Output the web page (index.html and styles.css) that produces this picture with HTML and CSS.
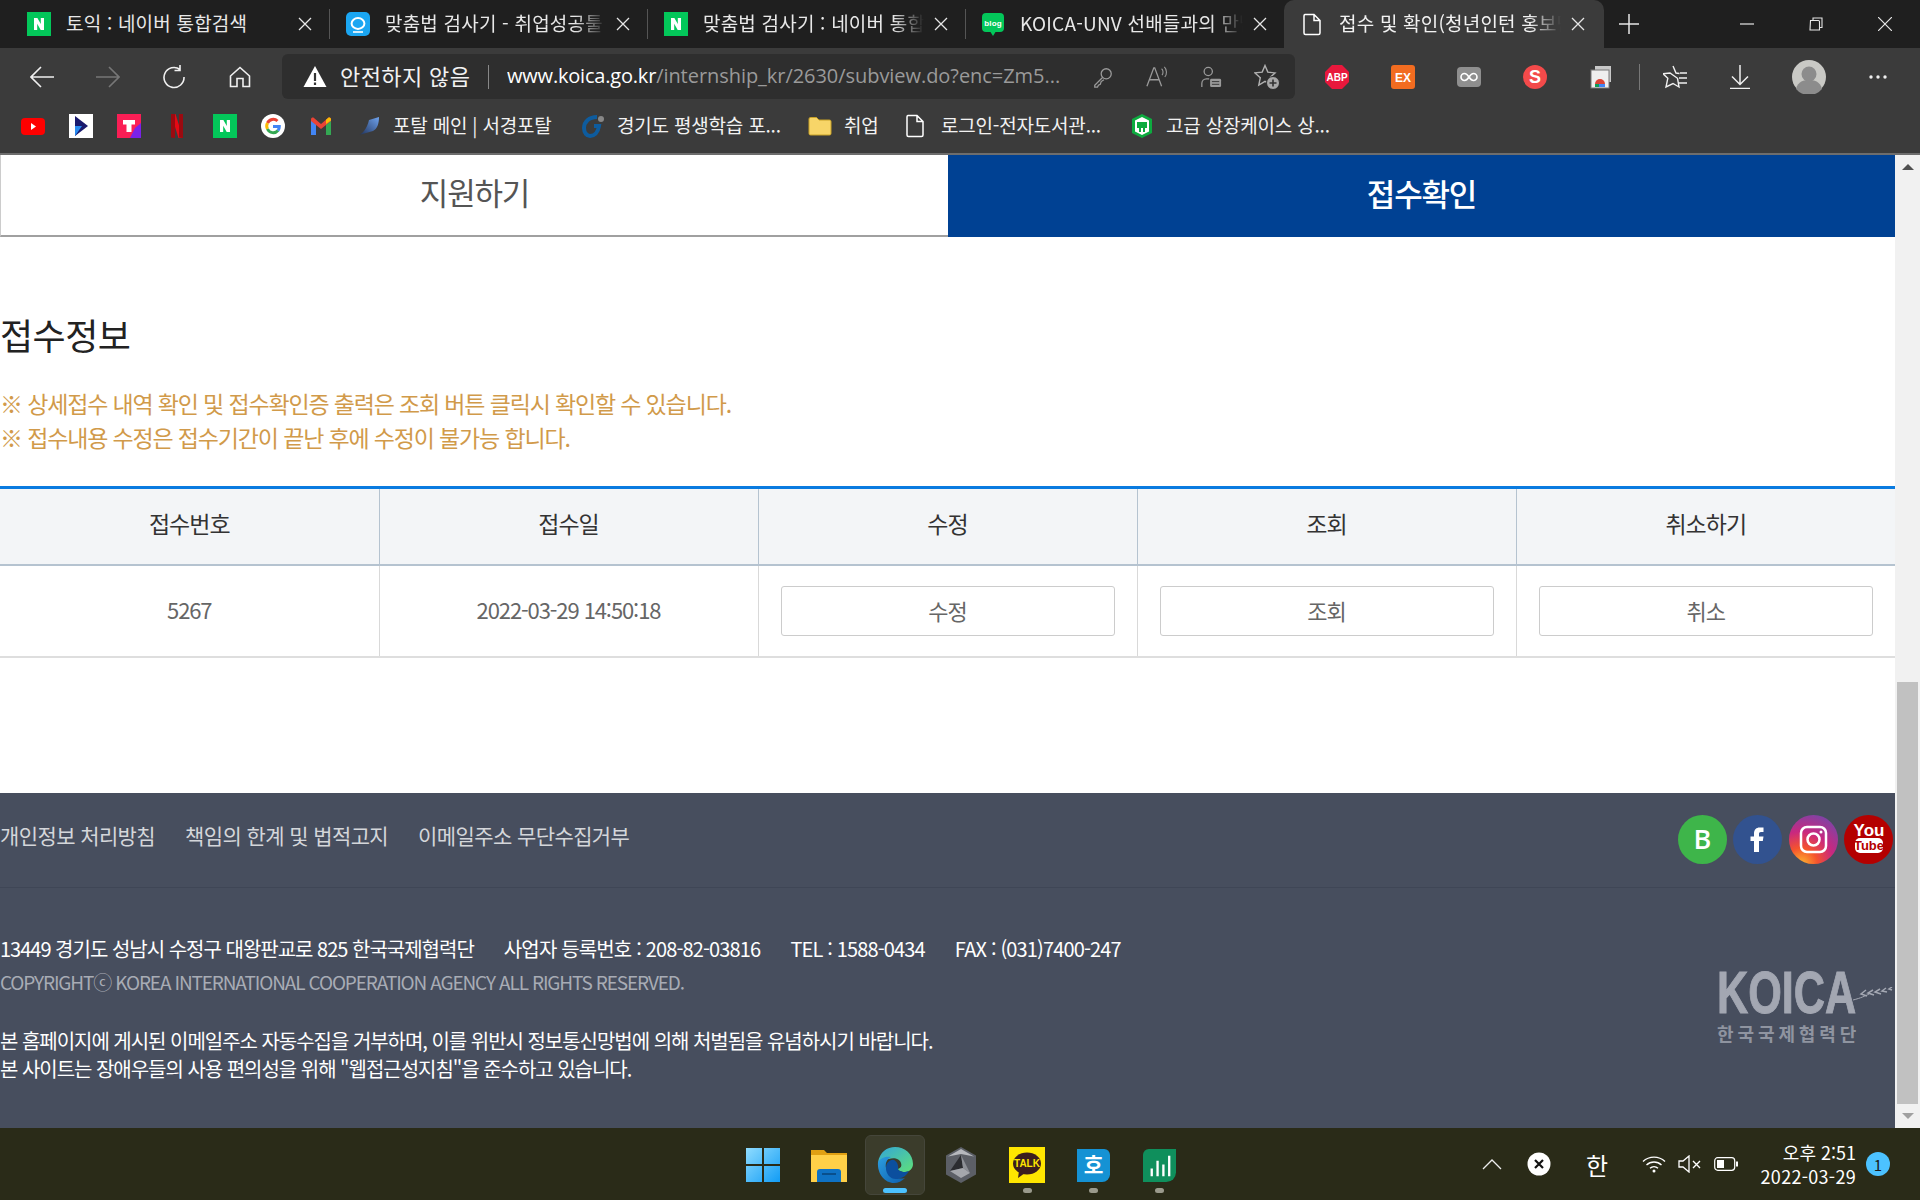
FILE: index.html
```html
<!DOCTYPE html>
<html lang="ko">
<head>
<meta charset="utf-8">
<title>접수 및 확인</title>
<link rel="stylesheet" href="styles.css">
</head>
<body>
<div class="screen">
  <header class="chrome">
    <div class="tabbar">
      <div class="tab t1">
        <svg class="fav" viewBox="0 0 24 24"><rect width="24" height="24" fill="#03c75a"/><path d="M7 6h3.4l3.4 6V6H17v12h-3.3l-3.5-6.2V18H7z" fill="#fff"/></svg>
        <span class="tabtext nofade">토익 : 네이버 통합검색</span>
        <svg class="tabx" viewBox="0 0 14 14"><path d="M1 1l12 12M13 1L1 13" stroke="#e6e6e6" stroke-width="1.3"/></svg>
      </div>
      <i class="tabsep"></i>
      <div class="tab t2">
        <svg class="fav" viewBox="0 0 24 24"><rect width="24" height="24" rx="5" fill="#1ba6f2"/><ellipse cx="12" cy="11.5" rx="6.4" ry="5.4" fill="none" stroke="#fff" stroke-width="2"/><path d="M7 20h10" stroke="#fff" stroke-width="1.6"/></svg>
        <span class="tabtext">맞춤법 검사기 - 취업성공툴</span>
        <svg class="tabx" viewBox="0 0 14 14"><path d="M1 1l12 12M13 1L1 13" stroke="#e6e6e6" stroke-width="1.3"/></svg>
      </div>
      <i class="tabsep"></i>
      <div class="tab t2">
        <svg class="fav" viewBox="0 0 24 24"><rect width="24" height="24" fill="#03c75a"/><path d="M7 6h3.4l3.4 6V6H17v12h-3.3l-3.5-6.2V18H7z" fill="#fff"/></svg>
        <span class="tabtext">맞춤법 검사기 : 네이버 통합검색</span>
        <svg class="tabx" viewBox="0 0 14 14"><path d="M1 1l12 12M13 1L1 13" stroke="#e6e6e6" stroke-width="1.3"/></svg>
      </div>
      <i class="tabsep"></i>
      <div class="tab t4">
        <svg class="fav" viewBox="0 0 24 24"><path d="M5 1h14a4 4 0 0 1 4 4v11a4 4 0 0 1-4 4h-4.500L12 24l-2.500-4H5a4 4 0 0 1-4-4V5a4 4 0 0 1 4-4z" fill="#03c75a"/><text x="12" y="13.500" class="blogtxt">blog</text></svg>
        <span class="tabtext">KOICA-UNV 선배들과의 만남</span>
        <svg class="tabx" viewBox="0 0 14 14"><path d="M1 1l12 12M13 1L1 13" stroke="#e6e6e6" stroke-width="1.3"/></svg>
      </div>
      <div class="tab active">
        <svg class="fav" viewBox="0 0 24 24"><path d="M5 2.500h9l6 6V21a1.500 1.500 0 0 1-1.500 1.500h-13A1.500 1.500 0 0 1 4 21V4a1.500 1.500 0 0 1 1-1.500zM14 2.500V8.500h6" fill="none" stroke="#fff" stroke-width="1.500"/></svg>
        <span class="tabtext">접수 및 확인(청년인턴 홍보단</span>
        <svg class="tabx" viewBox="0 0 14 14"><path d="M1 1l12 12M13 1L1 13" stroke="#e6e6e6" stroke-width="1.3"/></svg>
      </div>
      <svg class="newtab" viewBox="0 0 20 20"><path d="M10 0v20M0 10h20" stroke="#e6e6e6" stroke-width="1.500"/></svg>
      <div class="winctl">
        <svg class="wbtn" viewBox="0 0 14 14"><path d="M0 7h14" stroke="#e6e6e6" stroke-width="1.200"/></svg>
        <svg class="wbtn" viewBox="0 0 14 14"><path d="M1.500 3.500h8a1 1 0 0 1 1 1v8.500h-9.500zM4 3.500V1h9v9.500h-2.500" fill="none" stroke="#e6e6e6" stroke-width="1.100"/></svg>
        <svg class="wbtn" viewBox="0 0 14 14"><path d="M0 0l14 14M14 0L0 14" stroke="#e6e6e6" stroke-width="1.200"/></svg>
      </div>
    </div>

    <div class="toolbar">
      <div class="nav">
        <svg class="ic24" viewBox="0 0 24 24"><path d="M1 12h23M11 2L1 12l10 10" fill="none" stroke="#f0f0f0" stroke-width="1.600"/></svg>
        <svg class="ic24" viewBox="0 0 24 24"><path d="M23 12H0M13 2l10 10-10 10" fill="none" stroke="#777" stroke-width="1.600"/></svg>
        <svg class="ic24" viewBox="0 0 24 24"><path d="M18 4.500A10 10 0 1 0 22 12M18 0v5.500h-5.500" fill="none" stroke="#f0f0f0" stroke-width="1.600"/></svg>
        <svg class="ic24" viewBox="0 0 24 24"><path d="M2.500 11L12 2.500 21.500 11v10.500h-6.500v-8h-6v8H2.500z" fill="none" stroke="#f0f0f0" stroke-width="1.600"/></svg>
      </div>
      <div class="addr">
        <svg class="warn" viewBox="0 0 24 24"><path d="M12 1l11.500 21H.5z" fill="#fff"/><path d="M12 8v8M12 17.500v2.500" stroke="#333" stroke-width="2.200"/></svg>
        <span class="insecure">안전하지 않음</span>
        <i class="addrsep"></i>
        <span class="url"><b>www.koica.go.kr</b>/internship_kr/2630/subview.do?enc=Zm5...</span>
        <div class="addric">
          <svg class="ic22" viewBox="0 0 24 24"><circle cx="15.500" cy="8.500" r="5.500" fill="none" stroke="#9a9a9a" stroke-width="1.400"/><path d="M11.500 12.500L3 21v2h3l1-2 2-1 1-3 3-2" fill="none" stroke="#9a9a9a" stroke-width="1.400"/></svg>
          <svg class="ic22" viewBox="0 0 24 24"><path d="M1 22L8.500 2h1L17 22M4 15h10.500" fill="none" stroke="#9a9a9a" stroke-width="1.400"/><path d="M17 3c2 1.500 2 5 .5 7M20 1c3 3 3 8 .5 11" fill="none" stroke="#9a9a9a" stroke-width="1.200"/></svg>
          <svg class="ic22" viewBox="0 0 24 24"><circle cx="9" cy="6" r="4.500" fill="none" stroke="#9a9a9a" stroke-width="1.400"/><path d="M2 23v-4a5 5 0 0 1 5-5h3" fill="none" stroke="#9a9a9a" stroke-width="1.400"/><rect x="11" y="14" width="12" height="9" rx="1.500" fill="#9a9a9a"/><path d="M13 17h8M13 20h8" stroke="#333"/></svg>
          <svg class="ic26" viewBox="0 0 26 26"><path d="M11 1.500l2.800 6.600 7.200.8-5.300 4.800 1.500 7.300-6.200-3.600-6.200 3.600 1.500-7.300L1 8.900l7.200-.8z" fill="none" stroke="#b0b0b0" stroke-width="1.400"/><circle cx="19" cy="19" r="6.500" fill="#a8a8a8" stroke="#2e2e2e"/><path d="M19 15.500v7M15.500 19h7" stroke="#333" stroke-width="1.600"/></svg>
        </div>
      </div>
      <div class="exts">
        <svg class="ic24" viewBox="0 0 24 24"><path d="M7 0h10l7 7v10l-7 7H7l-7-7V7z" fill="#e8183c"/><text x="12" y="16" class="abp">ABP</text></svg>
        <svg class="ic24" viewBox="0 0 24 24"><rect width="24" height="24" rx="3" fill="#f26c20"/><text x="12" y="16.500" class="ex">EX</text></svg>
        <svg class="ic24" viewBox="0 0 24 24"><rect y="2" width="24" height="20" rx="4" fill="#8f8f8f"/><path d="M12 12c-2-3-3-3.500-4.500-3.500a3.500 3.500 0 0 0 0 7C9 15.500 10 15 12 12s3-3.500 4.500-3.500a3.500 3.500 0 0 1 0 7C15 15.500 14 15 12 12z" fill="none" stroke="#fff" stroke-width="1.600"/></svg>
        <svg class="ic24" viewBox="0 0 24 24"><circle cx="12" cy="12" r="12" fill="#f34a4a"/><text x="12" y="18" class="sx">S</text></svg>
        <svg class="ic24" viewBox="0 0 24 24"><rect x="6" y="1" width="16" height="16" fill="#c8c8c8"/><rect x="2" y="5" width="18" height="18" fill="#efefef" stroke="#777"/><path d="M6 19a5 5 0 0 1 10 0z" fill="#db4437"/><path d="M6 19h4v3H6z" fill="#0f9d58"/><path d="M10 19h6v3h-6z" fill="#4285f4"/></svg>
        <i class="extsep"></i>
        <svg class="ic24" viewBox="0 0 24 24"><path d="M10 1l3 7 3.500.5M14.500 13.300L16 22l-6-3.500L3 22l1.800-8.700L0 8.800 7 8z" fill="none" stroke="#f0f0f0" stroke-width="1.400"/><path d="M17 8h7M16 13h8M15 18h9" stroke="#f0f0f0" stroke-width="1.400"/></svg>
        <svg class="ic24 dl" viewBox="0 0 24 24"><path d="M12 0v19M4 11.500l8 8 8-8M2 23.500h20" fill="none" stroke="#f0f0f0" stroke-width="1.500"/></svg>
        <svg class="avatar" viewBox="0 0 34 34"><circle cx="17" cy="17" r="17" fill="#c9c9c5"/><circle cx="17" cy="14" r="7.500" fill="#8c8c8c"/><path d="M4 29c2-8 8-9 13-9s11 1 13 9a17 17 0 0 1-26 0z" fill="#8c8c8c"/></svg>
        <svg class="more" viewBox="0 0 20 4"><circle cx="3" cy="2" r="1.700" fill="#f0f0f0"/><circle cx="10" cy="2" r="1.700" fill="#f0f0f0"/><circle cx="17" cy="2" r="1.700" fill="#f0f0f0"/></svg>
      </div>
    </div>

    <div class="bookmarks">
      <svg class="bm" viewBox="0 0 24 24"><rect y="4" width="24" height="17" rx="4" fill="#f00"/><path d="M10 9l5 3.500-5 3.500z" fill="#fff"/></svg>
      <svg class="bm" viewBox="0 0 24 24"><rect width="24" height="24" fill="#fff"/><path d="M6 2l13 10L6 22z" fill="#1a1a6e"/><path d="M6 12h7L6 22z" fill="#2a8cf0"/></svg>
      <svg class="bm" viewBox="0 0 24 24"><rect width="24" height="24" fill="#fa1e55"/><path d="M18 14l6-5v15H13z" fill="#7a22e8"/><path d="M6 6h12v4.500h-3.500V18h-5v-7.500H6z" fill="#fff"/></svg>
      <svg class="bm" viewBox="0 0 24 24"><path d="M6 0h4.500L18 24h-4.500z" fill="#e50914"/><path d="M6 0h4v24l-4-.5zM14 0h4v24l-4-.5z" fill="#9b0a10"/></svg>
      <svg class="bm" viewBox="0 0 24 24"><rect width="24" height="24" fill="#03c75a"/><path d="M7 6h3.400l3.400 6V6H17v12h-3.300l-3.500-6.200V18H7z" fill="#fff"/></svg>
      <svg class="bm" viewBox="0 0 24 24"><circle cx="12" cy="12" r="12" fill="#fff"/><path d="M6.500 9a6.300 6.300 0 0 1 10-2" fill="none" stroke="#ea4335" stroke-width="3"/><path d="M6.500 9a6.300 6.300 0 0 0 0 6" fill="none" stroke="#fbbc05" stroke-width="3"/><path d="M6.500 15a6.300 6.300 0 0 0 10.500 1.500" fill="none" stroke="#34a853" stroke-width="3"/><path d="M17 16.500a6.300 6.300 0 0 0 1.300-4H12" fill="none" stroke="#4285f4" stroke-width="3"/></svg>
      <svg class="bm" viewBox="0 0 24 24"><path d="M2 21V6l5 4v11z" fill="#4285f4"/><path d="M22 21V6l-5 4v11z" fill="#34a853"/><path d="M2 5.500c0-2 2-2.500 3-1.500l7 6 7-6c1-1 3-.5 3 1.500V7l-5 4-5 4-5-4-5-4z" fill="#ea4335"/><path d="M17 10l5-3.500V5.500c0-2-2-2.500-3-1.500l-2 1.700z" fill="#fbbc05"/></svg>
      <div class="bmi b1">
        <svg class="bm bmicon" viewBox="0 0 24 24"><defs><linearGradient id="sg" x1="0" y1="1" x2="1" y2="0"><stop offset="0" stop-color="#1d2f58"/><stop offset="1" stop-color="#6fa3ee"/></linearGradient></defs><path d="M12 6l10-3c0 7-2 12-6 14l-14 4c3-1 8-6 10-15z" fill="url(#sg)"/></svg>
        <span class="bmtext">포탈 메인 | 서경포탈</span>
      </div>
      <div class="bmi b2">
        <svg class="bm bmicon" viewBox="0 0 24 24"><path d="M16 3C8 3 3 8 3 14c0 5 3 8 6 8 4 0 8-3 9-10h-5" fill="none" stroke="#0e5c9e" stroke-width="4"/><circle cx="20" cy="5" r="3" fill="#888"/></svg>
        <span class="bmtext">경기도 평생학습 포...</span>
      </div>
      <div class="bmi b3">
        <svg class="bm bmicon" viewBox="0 0 24 24"><path d="M1 5a1.500 1.500 0 0 1 1.500-1.500h6L11 6h10.500A1.500 1.500 0 0 1 23 7.500v12a1.500 1.500 0 0 1-1.500 1.500h-19A1.500 1.500 0 0 1 1 19.500z" fill="#f7d568" stroke="#c9a227"/></svg>
        <span class="bmtext">취업</span>
      </div>
      <div class="bmi b4">
        <svg class="bm bmicon wide-gap" viewBox="0 0 24 24"><path d="M5 1.500h9l6 6V21a1.500 1.500 0 0 1-1.500 1.500h-13A1.500 1.500 0 0 1 4 21V3a1.500 1.500 0 0 1 1-1.500zM14 1.500V7.500h6" fill="none" stroke="#fff" stroke-width="1.500"/></svg>
        <span class="bmtext">로그인-전자도서관...</span>
      </div>
      <div class="bmi b5">
        <svg class="bm bmicon" viewBox="0 0 24 24"><path d="M12 0l10 5v14l-10 5-10-5V5z" fill="#0dab3f"/><path d="M12 3l7 3.500v11L12 21l-7-3.500v-11z" fill="#fff"/><path d="M7 8h10v6H7z" fill="#0dab3f"/><path d="M9 14h2v4H9zM13 14h2v4h-2z" fill="#0dab3f"/></svg>
        <span class="bmtext">고급 상장케이스 상...</span>
      </div>
    </div>
  </header>

  <div class="viewport">
    <main class="page">
      <nav class="steps">
        <a class="step">지원하기</a>
        <a class="step on">접수확인</a>
      </nav>
      <section class="info">
        <h2 class="title">접수정보</h2>
        <p class="note">※ 상세접수 내역 확인 및 접수확인증 출력은 조회 버튼 클릭시 확인할 수 있습니다.</p>
        <p class="note">※ 접수내용 수정은 접수기간이 끝난 후에 수정이 불가능 합니다.</p>
      </section>
      <table class="grid">
        <thead>
          <tr><th>접수번호</th><th>접수일</th><th>수정</th><th>조회</th><th>취소하기</th></tr>
        </thead>
        <tbody>
          <tr>
            <td>5267</td>
            <td>2022-03-29 14:50:18</td>
            <td><button class="btn">수정</button></td>
            <td><button class="btn">조회</button></td>
            <td><button class="btn">취소</button></td>
          </tr>
        </tbody>
      </table>
      <footer class="foot">
        <div class="foot-top">
          <div class="links"><a>개인정보 처리방침</a><a>책임의 한계 및 법적고지</a><a>이메일주소 무단수집거부</a></div>
          <div class="social">
            <svg class="soc" viewBox="0 0 49 49"><circle cx="24.500" cy="24.500" r="24.500" fill="#3eb54a"/><text x="24.500" y="34" class="socb">B</text></svg>
            <svg class="soc" viewBox="0 0 49 49"><circle cx="24.500" cy="24.500" r="24.500" fill="#32528f"/><path d="M21 37V26h-3.500v-4.500H21v-3c0-4 2.500-6 5.500-6h4v4.500h-2.500c-1.500 0-2 .7-2 2v2.500h4.500l-.7 4.500H26v11z" fill="#fff"/></svg>
            <svg class="soc" viewBox="0 0 49 49"><defs><radialGradient id="ig" cx="25%" cy="100%" r="110%"><stop offset="0" stop-color="#fdb62f"/><stop offset=".3" stop-color="#f5532d"/><stop offset=".6" stop-color="#c9287f"/><stop offset="1" stop-color="#7a45a8"/></radialGradient></defs><circle cx="24.500" cy="24.500" r="24.500" fill="url(#ig)"/><rect x="12" y="12" width="25" height="25" rx="6" fill="none" stroke="#fff" stroke-width="2.500"/><circle cx="24.500" cy="24.500" r="6" fill="none" stroke="#fff" stroke-width="2.500"/><circle cx="32" cy="17" r="1.500" fill="#fff"/></svg>
            <svg class="soc" viewBox="0 0 49 49"><circle cx="24.500" cy="24.500" r="24.500" fill="#b40000"/><text x="25" y="21" class="yt1">You</text><rect x="11" y="23" width="28" height="15" rx="5" fill="#fff"/><text x="25" y="35" class="yt2">Tube</text></svg>
          </div>
        </div>
        <div class="foot-bottom">
          <div class="foot-text">
            <p class="addrline"><span>13449 경기도 성남시 수정구 대왕판교로 825 한국국제협력단</span><span class="num">사업자 등록번호 : 208-82-03816</span><span class="num">TEL : 1588-0434</span><span class="num">FAX : (031)7400-247</span></p>
            <p class="copy">COPYRIGHTⓒ KOREA INTERNATIONAL COOPERATION AGENCY ALL RIGHTS RESERVED.</p>
            <p class="legal first">본 홈페이지에 게시된 이메일주소 자동수집을 거부하며, 이를 위반시 정보통신망법에 의해 처벌됨을 유념하시기 바랍니다.</p>
            <p class="legal">본 사이트는 장애우들의 사용 편의성을 위해 "웹접근성지침"을 준수하고 있습니다.</p>
          </div>
          <div class="logo">
            <div class="logo-row"><span class="logo-main">KOICA</span><svg class="wheat" viewBox="0 0 40 14"><path d="M0 13C8 11 12 9 16 7" fill="none" stroke="#a3a7b2"/><path d="M13 3l-5 4 6 2M20 3l-5 3 6 2M27 2l-5 3 6 2M33 1l-4 3 5 1M39 0l-3 2 3 1" fill="none" stroke="#a3a7b2" stroke-width="1.500"/></svg></div>
            <div class="logo-sub">한국국제협력단</div>
          </div>
        </div>
      </footer>
    </main>
    <aside class="scroll">
      <div class="arrow"><i class="up"></i></div>
      <div class="track"><div class="thumb"></div></div>
      <div class="arrow"><i class="down"></i></div>
    </aside>
  </div>

  <footer class="taskbar">
    <div class="apps">
      <div class="app"><svg class="ic36" viewBox="0 0 36 36"><defs><linearGradient id="wn" x1="0" y1="0" x2="1" y2="1"><stop offset="0" stop-color="#8fdcff"/><stop offset="1" stop-color="#119cf5"/></linearGradient></defs><path d="M1 1h16v16H1zM19 1h16v16H19zM1 19h16v16H1zM19 19h16v16H19z" fill="url(#wn)"/></svg></div>
      <div class="app"><svg class="ic36" viewBox="0 0 36 36"><path d="M0 3h13l3 3h20v29H0z" fill="#e0a013"/><path d="M0 8h36v27H0z" fill="#ffd048"/><path d="M6 35V25a3 3 0 0 1 3-3h18a3 3 0 0 1 3 3v10z" fill="#0f72c4"/><path d="M11 27h14" stroke="#094f8c" stroke-width="2"/></svg></div>
      <div class="app current"><svg class="ic36" viewBox="0 0 36 36"><defs><linearGradient id="eg" x1="0" y1="0" x2="1" y2="1"><stop offset="0" stop-color="#33a5d8"/><stop offset="1" stop-color="#5fe07a"/></linearGradient><linearGradient id="eb" x1="0" y1="0" x2="1" y2="1"><stop offset="0" stop-color="#2c9ee0"/><stop offset="1" stop-color="#0d5fae"/></linearGradient></defs><path d="M1 15C3 5 10 0 18 0c10 0 18 7 18 17 0 4-3 8-8 8-4 0-7-2-7-3 3-1 4-3 3-6-1-4-7-6-12-4-5 1-9 2-11 3z" fill="url(#eg)"/><path d="M1 15c3-5 9-6 13-5-4 2-6 6-5 11 2 8 11 12 19 10-3 3-7 5-11 5C8 36 0 27 1 15z" fill="url(#eb)"/><path d="M9 21c0-5 4-9 8-8 2 1 5 4 4 9 0 1 3 3 7 3 2 0 3-1 4-1-3 6-9 8-13 8-6 0-10-5-10-11z" fill="#0b4f9e"/></svg></div>
      <div class="app"><svg class="ic36" viewBox="0 0 36 36"><path d="M18 0l15 8.500v19L18 36 3 27.500v-19z" fill="#5c5f66"/><path d="M18 2l13 7.500L18 7 5 9.500z" fill="#b6b8bd"/><path d="M18 8L7 24l13-3z" fill="#2b2c30"/><path d="M18 8l9 18-7-5z" fill="#8d9096"/><path d="M7 24l13-3 7 5-9 5z" fill="#a5a7ac"/></svg></div>
      <div class="app"><svg class="ic36" viewBox="0 0 36 36"><rect width="36" height="36" fill="#ffe600"/><ellipse cx="18" cy="16.500" rx="14" ry="11" fill="#3c1e1e"/><path d="M10 24l-1 7 7-5z" fill="#3c1e1e"/><text x="18" y="20" class="talk">TALK</text></svg></div>
      <div class="app"><svg class="ic34" viewBox="0 0 34 34"><path d="M0 0h28a6 6 0 0 1 6 6v20a8 8 0 0 1-8 8H0z" fill="#1592d4"/><text x="17" y="25" class="ho">호</text></svg></div>
      <div class="app"><svg class="ic34" viewBox="0 0 34 34"><path d="M6 0h28v24a10 10 0 0 1-10 10H0V6a6 6 0 0 1 6-6z" fill="#0f8f5c"/><path d="M9 20v8M15 12v16M21 16v12M27 7v21" stroke="#fff" stroke-width="2.400"/></svg></div>
    </div>
    <div class="pips">
      <i class="pip none"></i><i class="pip none"></i><i class="pip wide"></i><i class="pip none"></i><i class="pip"></i><i class="pip"></i><i class="pip"></i>
    </div>
    <div class="tray">
      <svg class="chev" viewBox="0 0 20 12"><path d="M1 11l9-9 9 9" fill="none" stroke="#eee" stroke-width="1.300"/></svg>
      <svg class="trayx" viewBox="0 0 24 24"><circle cx="12" cy="12" r="11.500" fill="#fff"/><path d="M8 8l8 8M16 8l-8 8" stroke="#111" stroke-width="2.200"/></svg>
      <span class="ime">한</span>
      <svg class="wifi" viewBox="0 0 24 18"><path d="M1 6.500a16 16 0 0 1 22 0M4.500 10a11 11 0 0 1 15 0M8 13.200a6 6 0 0 1 8 0" fill="none" stroke="#fff" stroke-width="1.400"/><circle cx="12" cy="16" r="1.500" fill="#fff"/></svg>
      <svg class="vol" viewBox="0 0 24 18"><path d="M1 6h4l6-5v16l-6-5H1z" fill="none" stroke="#fff" stroke-width="1.300"/><path d="M15 6l7 7M22 6l-7 7" stroke="#fff" stroke-width="1.400"/></svg>
      <svg class="batt" viewBox="0 0 24 14"><rect x=".7" y=".7" width="20" height="12.600" rx="3" fill="none" stroke="#fff" stroke-width="1.200"/><rect x="3" y="3" width="7" height="8" fill="#fff"/><rect x="22" y="4.500" width="2" height="5" fill="#fff"/></svg>
      <div class="clock"><span>오후 2:51</span><span class="clock-date">2022-03-29</span></div>
      <span class="badge">1</span>
    </div>
  </footer>
</div>
</body>
</html>
```

FILE: styles.css
```css
* { box-sizing: border-box; }
html, body { margin: 0; padding: 0; }
body { width: 1920px; height: 1200px; overflow: hidden; font-family: "Noto Sans CJK KR", "Noto Sans", sans-serif; }
p, h2 { margin: 0; font-weight: 400; }
svg { display: block; flex: none; }
i { display: block; }

.screen { display: flex; flex-direction: column; height: 1200px; }

/* browser chrome */
.chrome { background: #3b3b3b; flex: none; height: 155px; border-bottom: 2px solid #6d6d6d; }
.tabbar { display: flex; align-items: center; height: 48px; background: #1f1f1f; }
.tab { display: flex; align-items: center; height: 48px; flex: none; color: #e8e8e8; font-size: 19px; letter-spacing: .2px; }
.t1 { width: 329px; padding: 0 17px 0 27px; }
.t2 { width: 317px; padding: 0 17px 0 16px; }
.t4 { width: 318px; padding: 0 17px 0 15px; }
.active { width: 320px; padding: 0 19px 0 16px; background: #3b3b3b; border-radius: 10px 10px 0 0; color: #f2f2f2; }
.fav { width: 24px; height: 24px; }
.tabtext { flex: 1; min-width: 0; margin-left: 15px; padding-bottom: 3px; white-space: nowrap; overflow: hidden; line-height: 28px; -webkit-mask-image: linear-gradient(90deg, #000 86%, transparent); mask-image: linear-gradient(90deg, #000 86%, transparent); }
.tabtext.nofade { -webkit-mask-image: none; mask-image: none; }
.tabx { width: 14px; height: 14px; margin-left: 10px; }
.tabsep { width: 1px; height: 30px; background: #555; flex: none; }
.newtab { width: 20px; height: 20px; margin-left: 15px; }
.winctl { display: flex; align-items: center; margin-left: auto; padding-right: 28px; gap: 55px; }
.wbtn { width: 14px; height: 14px; }
.blogtxt { font: 700 8px "Liberation Sans", sans-serif; fill: #fff; text-anchor: middle; }

.toolbar { display: flex; align-items: center; height: 57px; }
.nav { display: flex; align-items: center; width: 282px; padding-left: 30px; gap: 42px; }
.ic24 { width: 24px; height: 24px; }
.ic22 { width: 22px; height: 22px; }
.ic26 { width: 26px; height: 26px; }
.addr { display: flex; align-items: center; width: 1013px; height: 45px; background: #2e2e2e; border-radius: 6px; padding-left: 21px; color: #f2f2f2; }
.warn { width: 24px; height: 24px; }
.insecure { margin-left: 13px; padding-bottom: 4px; font-size: 22px; letter-spacing: .4px; width: 135px; white-space: nowrap; }
.addrsep { width: 1px; height: 24px; background: #888; margin-left: 13px; }
.url { margin-left: 18px; padding-bottom: 2px; font-size: 20px; color: #9a9a9a; letter-spacing: -.05px; white-space: nowrap; width: 556px; overflow: hidden; font-family: "Open Sans", "Noto Sans", sans-serif; }
.url b { font-weight: 400; color: #fff; letter-spacing: -.2px; }
.addric { display: flex; align-items: center; margin-left: 29px; gap: 32px; }
.exts { display: flex; align-items: center; padding-left: 30px; gap: 42px; }
.extsep { width: 1px; height: 26px; background: #777; margin: 0 -19px 0 -16px; }
.dl { margin-left: -1px; }
.avatar { width: 34px; height: 34px; margin-left: -2px; }
.more { width: 20px; height: 4px; }

.bookmarks { display: flex; align-items: center; height: 48px; padding: 0 0 6px 21px; gap: 24px; color: #f2f2f2; font-size: 19px; letter-spacing: -.2px; }
.bm { width: 24px; height: 24px; }
.bmi { display: flex; align-items: center; white-space: nowrap; }
.bmicon { margin-right: 12px; }
.wide-gap { margin-right: 14px; }
.bmtext { padding-bottom: 3px; }
.b1 { width: 200px; }
.b2 { width: 203px; }
.b3 { width: 71px; }
.b4 { width: 203px; }

/* page */
.viewport { flex: 1; display: flex; min-height: 0; }
.page { width: 1895px; display: flex; flex-direction: column; background: #fff; }
.steps { display: flex; height: 82px; flex: none; }
.step { flex: 1; display: flex; align-items: center; justify-content: center; padding-bottom: 8px; font-size: 31px; letter-spacing: -1.200px; color: #555; background: #fff; border-left: 1px solid #ccc; border-bottom: 2px solid #a0a0a0; }
.step.on { background: #004193; color: #fff; border: 0; font-weight: 500; }
.info { padding-top: 72px; height: 249px; flex: none; }
.title { font-size: 36px; line-height: 50px; letter-spacing: -.5px; color: #222; margin-bottom: 27px; }
.note { font-size: 23px; line-height: 34px; letter-spacing: -1.150px; color: #d19a4a; }

.grid { width: 100%; table-layout: fixed; border-collapse: collapse; border-top: 3px solid #0a7be0; flex: none; }
.grid th { height: 77px; font-weight: 400; font-size: 23px; letter-spacing: -1px; color: #333; background: #f3f5f7; border-right: 1px solid #b5c3d0; border-bottom: 2px solid #b5c3d0; padding: 0 0 6px; }
.grid td { height: 92px; text-align: center; font-size: 22px; letter-spacing: -1.100px; color: #666; border-right: 1px solid #d9d9d9; border-bottom: 2px solid #dedede; padding: 0 22px 4px; }
.grid th:last-child, .grid td:last-child { border-right: 0; }
.btn { display: block; width: 100%; height: 50px; background: #fff; border: 1px solid #ccc; border-radius: 3px; font: inherit; letter-spacing: -1px; color: #666; padding: 0 0 2px; margin-top: 4px; }

.foot { margin-top: 135px; flex: 1; background: #474e5e; display: flex; flex-direction: column; }
.foot-top { display: flex; justify-content: space-between; align-items: center; height: 95px; border-bottom: 1px solid #3f4656; }
.links { display: flex; gap: 30px; font-size: 21px; letter-spacing: -.6px; color: #d4d6da; margin-top: -10px; }
.social { display: flex; gap: 6.500px; padding-right: 2px; }
.soc { width: 49px; height: 49px; }
.socb { font: 600 27px "Open Sans", sans-serif; fill: #fff; text-anchor: middle; }
.yt1 { font: 700 17px "Liberation Sans Narrow", "Liberation Sans", sans-serif; fill: #fff; text-anchor: middle; }
.yt2 { font: 700 13px "Liberation Sans Narrow", "Liberation Sans", sans-serif; fill: #b40000; text-anchor: middle; }
.foot-bottom { display: flex; justify-content: space-between; align-items: flex-start; padding-top: 44px; }
.addrline { display: flex; gap: 30px; font-size: 20px; line-height: 34px; letter-spacing: -1px; color: #fff; }
.num { letter-spacing: -.85px; }
.copy { font-size: 19px; line-height: 31px; letter-spacing: -1.140px; color: #a8acb5; }
.legal { font-size: 20px; line-height: 28px; letter-spacing: -1.030px; color: #fff; }
.first { margin-top: 30px; }
.logo { padding: 37px 1px 0 0; width: 178px; color: #a3a7b2; }
.logo-row { display: flex; align-items: flex-end; height: 48px; }
.logo-main { font: 700 60px/48px "Liberation Sans", sans-serif; -webkit-text-stroke: 1px #a3a7b2; transform: scaleX(.72); transform-origin: left; width: 136px; display: block; white-space: nowrap; letter-spacing: 0; }
.wheat { width: 40px; height: 14px; margin-bottom: 16px; }
.logo-sub { font-size: 18px; line-height: 24px; margin-top: 4px; letter-spacing: 3.900px; font-weight: 700; color: #8f94a0; white-space: nowrap; }

/* scrollbar */
.scroll { width: 25px; flex: none; background: #f1f1f1; display: flex; flex-direction: column; }
.arrow { height: 24px; flex: none; display: flex; align-items: center; justify-content: center; }
.up { border: 6px solid transparent; border-top: 0; border-bottom: 6px solid #505050; }
.down { border: 6px solid transparent; border-bottom: 0; border-top: 6px solid #a0a0a0; }
.track { flex: 1; display: flex; flex-direction: column; justify-content: flex-end; padding: 0 2px; }
.thumb { height: 422px; background: #c1c1c1; }

/* taskbar */
.taskbar { flex: none; height: 72px; background: #2a2b18; position: relative; display: flex; justify-content: flex-end; align-items: center; color: #fff; }
.apps { position: absolute; left: 733px; top: 7px; display: flex; gap: 6px; }
.app { width: 60px; height: 60px; display: flex; align-items: center; justify-content: center; border-radius: 6px; }
.current { background: #3b3c2b; border: 1px solid #45463a; }
.ic36 { width: 36px; height: 36px; }
.ic34 { width: 33px; height: 33px; }
.pips { position: absolute; left: 733px; top: 60px; display: flex; gap: 6px; }
.pip { width: 60px; height: 6px; position: relative; }
.pip::after { content: ""; display: block; width: 9px; height: 5px; margin: 0 auto; border-radius: 3px; background: #9a9a8c; }
.pip.wide::after { width: 24px; background: #4cc2ff; }
.pip.none::after { display: none; }
.tray { display: flex; align-items: center; padding-right: 30px; }
.chev { width: 20px; height: 12px; margin-right: 25px; }
.trayx { width: 24px; height: 24px; margin-right: 34px; }
.ime { font-size: 24px; width: 24px; margin-right: 33px; text-align: center; }
.wifi { width: 24px; height: 18px; margin-right: 12px; }
.vol { width: 24px; height: 18px; margin-right: 12px; }
.batt { width: 24px; height: 14px; }
.clock { display: flex; flex-direction: column; align-items: flex-end; width: 118px; margin-right: 10px; font: 400 18px/24px "Noto Sans CJK KR", sans-serif; white-space: nowrap; }
.clock-date { letter-spacing: .3px; }
.badge { width: 24px; height: 24px; border-radius: 50%; background: #4cc2ff; color: #1a1a1a; display: flex; align-items: center; justify-content: center; font-size: 15px; }
.abp { font: 700 10px "Liberation Sans", sans-serif; fill: #fff; text-anchor: middle; }
.ex { font: 700 12px "Liberation Sans", sans-serif; fill: #fff; text-anchor: middle; }
.sx { font: 700 18px "Liberation Sans", sans-serif; fill: #fff; text-anchor: middle; }
.talk { font: 700 10px "Liberation Sans", sans-serif; fill: #ffe600; text-anchor: middle; }
.ho { font: 700 22px "Noto Sans CJK KR", sans-serif; fill: #fff; text-anchor: middle; }
```
